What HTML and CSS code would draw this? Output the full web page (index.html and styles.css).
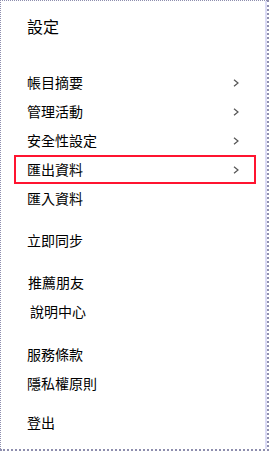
FILE: index.html
```html
<!DOCTYPE html>
<html lang="zh-Hant">
<head>
<meta charset="utf-8">
<link rel="stylesheet" href="styles.css">
</head>
<body>
<div class="frame">
  <div class="title">設定</div>
  <div class="group g1">
    <div class="item"><span>帳目摘要</span><svg class="chev" viewBox="0 0 6 8" width="6" height="8"><polyline points="1,0.7 5,4 1,7.3"/></svg></div>
    <div class="item"><span>管理活動</span><svg class="chev" viewBox="0 0 6 8" width="6" height="8"><polyline points="1,0.7 5,4 1,7.3"/></svg></div>
    <div class="item"><span>安全性設定</span><svg class="chev" viewBox="0 0 6 8" width="6" height="8"><polyline points="1,0.7 5,4 1,7.3"/></svg></div>
    <div class="item active"><span>匯出資料</span><svg class="chev" viewBox="0 0 6 8" width="6" height="8"><polyline points="1,0.7 5,4 1,7.3"/></svg></div>
    <div class="item"><span>匯入資料</span></div>
  </div>
  <div class="group g2">
    <div class="item"><span>立即同步</span></div>
  </div>
  <div class="group g3">
    <div class="item"><span class="s1">推薦朋友</span></div>
    <div class="item"><span class="s3">說明中心</span></div>
  </div>
  <div class="group g4">
    <div class="item"><span>服務條款</span></div>
    <div class="item"><span>隱私權原則</span></div>
  </div>
  <div class="group g5">
    <div class="item"><span>登出</span></div>
  </div>
</div>
</body>
</html>
```
FILE: styles.css
```css
html, body {
  margin: 0;
  padding: 0;
  background: #ffffff;
}
.frame {
  box-sizing: border-box;
  width: 269px;
  height: 451px;
  border-top: 1px dotted #8e8eae;
  border-left: 1px dotted #8e8eae;
  border-right: 2px dotted #8e8eae;
  border-bottom: 2px dotted #8e8eae;
  box-shadow: inset -2px 0 0 #dcdcf6;
  padding-top: 13px;
  font-family: "Noto Sans CJK TC", "Noto Sans", sans-serif;
  color: #000000;
}
.title {
  margin-left: 26px;
  font-size: 16px;
  line-height: 24px;
  height: 24px;
}
.group {
  display: flex;
  flex-direction: column;
}
.g1 { margin-top: 30px; }
.g2 { margin-top: 13px; }
.g3 { margin-top: 13px; }
.g4 { margin-top: 14px; }
.g5 { margin-top: 10px; }
.item {
  box-sizing: border-box;
  margin-left: 13px;
  width: 242px;
  height: 29px;
  padding: 0 15px 0 11px;
  display: flex;
  align-items: center;
  justify-content: space-between;
  font-size: 14px;
  line-height: 29px;
  border: 2px solid transparent;
}
.item.active {
  border-color: #ff1430;
}
.s1 { margin-left: 1px; }
.s3 { margin-left: 3px; }
.chev {
  fill: none;
  stroke: #555555;
  stroke-width: 1.2;
  flex: none;
}
```
